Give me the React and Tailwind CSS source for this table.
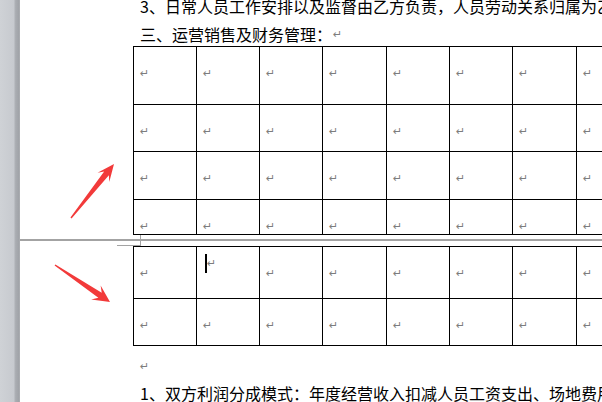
import React from 'react';

const COLS = ['w-[63px]', 'w-[63px]', 'w-[63px]', 'w-[64px]', 'w-[63px]', 'w-[63px]', 'w-[64px]', 'w-[63px]'];

const Mark = ({ className = '' }) => (
  <span className={`font-['DejaVu_Sans',sans-serif] text-[11px] leading-[13px] text-[#7d7d7d] ${className}`}>↵</span>
);

const Cell = ({ width, cursor }) => (
  <div className={`${width} shrink-0 border-r border-black`}>
    {cursor ? (
      <div className="pl-[8px] pt-[7px] flex items-center">
        <span className="w-[2px] h-[19px] bg-black" />
        <Mark />
      </div>
    ) : (
      <div className="pl-[6px] pt-[11px]">
        <Mark />
      </div>
    )}
  </div>
);

const Row = ({ height, cursorAt }) => (
  <div className={`flex border-b border-black ${height}`}>
    {COLS.map((w, i) => (
      <Cell key={i} width={w} cursor={cursorAt === i} />
    ))}
  </div>
);

// annotation arrow, tapered shaft + barbed head
const arrowPoints = (tx, ty, hx, hy, headW = 7.5) => {
  const dx = hx - tx;
  const dy = hy - ty;
  const len = Math.hypot(dx, dy);
  const ux = dx / len;
  const uy = dy / len;
  const nx = -uy;
  const ny = ux;
  const p = (d, w) => `${hx - ux * d + nx * w},${hy - uy * d + ny * w}`;
  return [
    `${tx + nx * 0.7},${ty + ny * 0.7}`,
    p(12, 3),
    p(17, headW),
    `${hx},${hy}`,
    p(17, -headW),
    p(12, -3),
    `${tx - nx * 0.7},${ty - ny * 0.7}`,
  ].join(' ');
};

const App = () => {
  return (
    <div className="relative w-[602px] h-[402px] overflow-hidden bg-white flex font-['Noto_Sans_CJK_SC',sans-serif] text-black">
      {/* left gutter of the editor */}
      <div className="w-[20px] shrink-0 bg-[linear-gradient(to_right,#cfd2d6,#c7cacf_68%,#aaadb2_78%,#9fa2a7_96%,#b9bbbe)]" />

      <div className="flex-1 flex flex-col overflow-hidden">
        <div className="ml-[120px] h-[12px] leading-[12px] text-[16px] whitespace-nowrap">
          3、日常人员工作安排以及监督由乙方负责，人员劳动关系归属为乙方
        </div>
        <div className="ml-[120px] mt-[11px] h-[22px] leading-[22px] text-[16px] whitespace-nowrap flex items-center">
          <span>三、运营销售及财务管理：</span>
          <Mark className="ml-[1px]" />
        </div>

        {/* table, page 1 */}
        <div className="ml-[113px] mt-px w-[640px] shrink-0 border-t border-l border-black">
          <Row height="h-[58px]" />
          <Row height="h-[47px]" />
          <Row height="h-[48px]" />
          <Row height="h-[35px]" />
        </div>

        {/* page break */}
        <div className="relative h-[11px] shrink-0">
          <div className="mt-[4px] h-[2px] bg-[#a3a3a3]" />
          <div className="absolute left-[120px] top-0 w-px h-[11px] bg-[#a3a3a3]" />
          <div className="absolute left-[97px] top-[10px] w-[24px] h-px bg-[#a3a3a3]" />
        </div>

        {/* table, page 2 */}
        <div className="ml-[113px] w-[640px] shrink-0 border-t border-l border-black">
          <Row height="h-[52px]" cursorAt={1} />
          <Row height="h-[47px]" />
        </div>

        <div className="ml-[120px] h-[40px] flex items-center shrink-0">
          <Mark />
        </div>
        <div className="ml-[120px] h-[14px] leading-[14px] text-[16px] whitespace-nowrap shrink-0">
          1、双方利润分成模式：年度经营收入扣减人员工资支出、场地费用
        </div>
      </div>

      <svg className="absolute inset-0 pointer-events-none" width="602" height="402" viewBox="0 0 602 402">
        <polygon points={arrowPoints(71, 218, 114, 164)} fill="#f23a3a" />
        <polygon points={arrowPoints(55, 265, 110, 302, 8.5)} fill="#f23a3a" />
      </svg>
    </div>
  );
};

export default App;
